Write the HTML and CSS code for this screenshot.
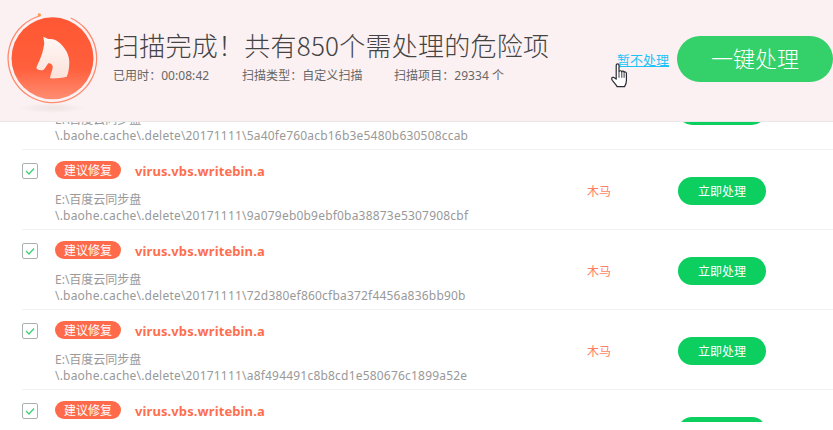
FILE: index.html
```
<!DOCTYPE html>
<html lang="zh-CN">
<head>
<meta charset="utf-8">
<title>扫描完成</title>
<link rel="stylesheet" href="styles.css">
</head>
<body>
<div class="page">
  <header class="banner">
    <div class="logo">
      <svg width="105" height="118" viewBox="0 0 105 118">
        <defs>
          <linearGradient id="disc" x1="0" y1="0" x2="0" y2="1">
            <stop offset="0" stop-color="#ff5733"/>
            <stop offset="0.62" stop-color="#ff5f3c"/>
            <stop offset="1" stop-color="#ff8e72"/>
          </linearGradient>
          <linearGradient id="horse" x1="0" y1="0" x2="0" y2="1">
            <stop offset="0" stop-color="#fff8f5"/>
            <stop offset="1" stop-color="#fbe2da"/>
          </linearGradient>
          <radialGradient id="shade">
            <stop offset="0" stop-color="#eee2e2"/>
            <stop offset="1" stop-color="#fbf1f2"/>
          </radialGradient>
        </defs>
        <ellipse cx="52" cy="108" rx="34" ry="5" fill="url(#shade)"/>
        <circle cx="52.500" cy="58.300" r="41" fill="url(#disc)"/>
        <path d="M70.700 18A44.300 44.300 0 1 1 39.300 16" fill="none" stroke="#ff8a6e" stroke-width="1.300"/>
        <circle cx="39.300" cy="15" r="1.700" fill="#ff9a4a"/>
        <path d="M43.300 36.700L48.300 39C51 39 54 39.300 56.700 40.700C61 43.500 64.500 47.500 66.700 51.700C68.500 55.500 69.500 59.500 69.300 63.300C69.200 68 68.500 73 66.700 76.700C62 78 55 78.600 50 78.300C50.500 74 52.500 70.500 52.700 66.700C52.500 64.500 50.500 63 48.300 63.300C46.500 65.500 45.500 68.500 43.300 70C41.500 70.500 39 70.200 37.300 69.300C36.300 68.500 36.300 67.500 36.700 66.700C40 60 43 53 44.300 43.300Z" fill="url(#horse)"/>
      </svg>
    </div>
    <div class="summary">
      <h1 class="title">扫描完成！共有850个需处理的危险项</h1>
      <div class="stats">
        <span class="stat stat-time">已用时：00:08:42</span>
        <span class="stat stat-type">扫描类型：自定义扫描</span>
        <span class="stat">扫描项目：29334 个</span>
      </div>
    </div>
    <div class="skip-wrap">
      <a class="skip" href="#">暂不处理</a>
      <svg class="hand" width="18" height="26" viewBox="0 0 18 28">
        <path d="M6 15V3.500C6 1.500 9 1.500 9 3.500V10.500C9 9 12 9 12 10.800C12 9.500 14.500 9.500 14.500 11.300C15 10.200 17 10.600 17 12.500V20C17 23 16 25 15 26.500H7C6 24.500 4 22.500 2 20C0.500 18 1 16 3 16.500C4 16.800 5 17.500 6 18.500Z" fill="#fff" stroke="#2b2b33" stroke-width="1.300" stroke-linejoin="round"/>
        <path d="M9 11V17M12 11V17M14.500 12V17" stroke="#2b2b33" stroke-width="1" fill="none"/>
      </svg>
    </div>
    <a class="fix-all" href="#">一键处理</a>
  </header>

  <div class="list-view">
    <ul class="list">
      <li class="row">
        <span class="check"><svg width="10" height="8" viewBox="0 0 10 8"><path d="M1 4L4 7L9 1.500" fill="none" stroke="#3ed07a" stroke-width="1.300"/></svg></span>
        <div class="info">
          <div class="head"><span class="tag">建议修复</span><span class="name">virus.vbs.writebin.a</span></div>
          <p class="path">E:\百度云同步盘<br><span class="hash">\.baohe.cache\.delete\20171111\5a40fe760acb16b3e5480b630508ccab</span></p>
        </div>
        <span class="kind">木马</span>
        <a class="fix" href="#">立即处理</a>
      </li>
      <li class="row">
        <span class="check"><svg width="10" height="8" viewBox="0 0 10 8"><path d="M1 4L4 7L9 1.500" fill="none" stroke="#3ed07a" stroke-width="1.300"/></svg></span>
        <div class="info">
          <div class="head"><span class="tag">建议修复</span><span class="name">virus.vbs.writebin.a</span></div>
          <p class="path">E:\百度云同步盘<br><span class="hash">\.baohe.cache\.delete\20171111\9a079eb0b9ebf0ba38873e5307908cbf</span></p>
        </div>
        <span class="kind">木马</span>
        <a class="fix" href="#">立即处理</a>
      </li>
      <li class="row">
        <span class="check"><svg width="10" height="8" viewBox="0 0 10 8"><path d="M1 4L4 7L9 1.500" fill="none" stroke="#3ed07a" stroke-width="1.300"/></svg></span>
        <div class="info">
          <div class="head"><span class="tag">建议修复</span><span class="name">virus.vbs.writebin.a</span></div>
          <p class="path">E:\百度云同步盘<br><span class="hash">\.baohe.cache\.delete\20171111\72d380ef860cfba372f4456a836bb90b</span></p>
        </div>
        <span class="kind">木马</span>
        <a class="fix" href="#">立即处理</a>
      </li>
      <li class="row">
        <span class="check"><svg width="10" height="8" viewBox="0 0 10 8"><path d="M1 4L4 7L9 1.500" fill="none" stroke="#3ed07a" stroke-width="1.300"/></svg></span>
        <div class="info">
          <div class="head"><span class="tag">建议修复</span><span class="name">virus.vbs.writebin.a</span></div>
          <p class="path">E:\百度云同步盘<br><span class="hash">\.baohe.cache\.delete\20171111\a8f494491c8b8cd1e580676c1899a52e</span></p>
        </div>
        <span class="kind">木马</span>
        <a class="fix" href="#">立即处理</a>
      </li>
      <li class="row">
        <span class="check"><svg width="10" height="8" viewBox="0 0 10 8"><path d="M1 4L4 7L9 1.500" fill="none" stroke="#3ed07a" stroke-width="1.300"/></svg></span>
        <div class="info">
          <div class="head"><span class="tag">建议修复</span><span class="name">virus.vbs.writebin.a</span></div>
        </div>
        <span class="kind"></span>
        <a class="fix" href="#"></a>
      </li>
    </ul>
  </div>
</div>
</body>
</html>
```
FILE: styles.css
```
* { box-sizing: border-box; }
html, body { margin: 0; padding: 0; background: #fff; }
body {
  width: 833px;
  height: 430px;
  overflow: hidden;
  font-family: "Noto Sans", "Noto Sans CJK SC", sans-serif;
}
.page { display: flex; flex-direction: column; height: 422px; }

.banner {
  display: flex;
  flex: none;
  height: 122px;
  background: #fbf1f2;
  border-bottom: 1px solid #ebe7e7;
}
.logo { flex: none; width: 113px; height: 118px; }
.logo svg { display: block; }
.summary { flex: none; width: 504px; padding-top: 25px; }
.title {
  margin: 0;
  font-size: 26px;
  font-weight: 300;
  line-height: 40px;
  letter-spacing: 0.25px;
  color: #444;
  white-space: nowrap;
  font-family: "Noto Sans CJK SC", sans-serif;
}
.stats { display: flex; margin-top: 1px; font-size: 12px; line-height: 19px; color: #666; letter-spacing: 0.05px; }
.stat { white-space: nowrap; }
.stat-time { width: 129px; }
.stat-type { width: 152px; }

.skip-wrap { position: relative; flex: none; width: 60px; padding-top: 50px; }
.skip { font-size: 13px; line-height: 19px; color: #1cc3f7; display: block; white-space: nowrap; font-family: "Noto Sans CJK SC", sans-serif; }
.hand { position: absolute; left: -7px; top: 62px; }

.fix-all {
  flex: none;
  align-self: flex-start;
  margin-top: 36px;
  width: 156px;
  height: 46px;
  border-radius: 23px;
  background: #34d069;
  color: #fff;
  font-size: 22px;
  line-height: 43px;
  text-align: center;
  text-decoration: none;
  font-family: "Noto Sans CJK SC", sans-serif;
  font-weight: 300;
}

.list-view { flex: 1; overflow: hidden; }
.list { list-style: none; margin: -52px 0 0 22px; padding: 0; }
.row {
  display: grid;
  grid-template-columns: 33px 532px 91px 88px;
  height: 80px;
  border-bottom: 1px solid #f2f2f2;
}
.check {
  display: flex;
  align-items: center;
  justify-content: center;
  width: 16px;
  height: 16px;
  margin-top: 13px;
  border: 1px solid #a9b3ae;
  border-radius: 2px;
  background: #fff;
}
.info { padding-top: 11px; }
.head { display: flex; align-items: center; height: 18px; }
.tag {
  width: 66px;
  height: 18px;
  border-radius: 9px;
  background: #ff6b4a;
  color: #fff;
  font-size: 12px;
  line-height: 18px;
  text-align: center;
  font-family: "Noto Sans CJK SC", sans-serif;
}
.name { margin: 1px 0 0 14px; font-size: 13px; font-weight: 700; letter-spacing: 0.1px; color: #ff6e4e; white-space: nowrap; }
.path {
  margin: 13px 0 0;
  font-size: 12px;
  line-height: 16px;
  color: #999;
  white-space: nowrap;
}
.hash { letter-spacing: 0.2px; }
.kind { padding-top: 33px; font-size: 12px; line-height: 16px; color: #ff7f62; font-family: "Noto Sans CJK SC", sans-serif; }
.fix {
  margin-top: 27px;
  height: 28px;
  border-radius: 14px;
  background: #0ccf60;
  color: #fff;
  font-size: 12px;
  line-height: 28px;
  text-align: center;
  text-decoration: none;
  font-family: "Noto Sans CJK SC", sans-serif;
}
```
